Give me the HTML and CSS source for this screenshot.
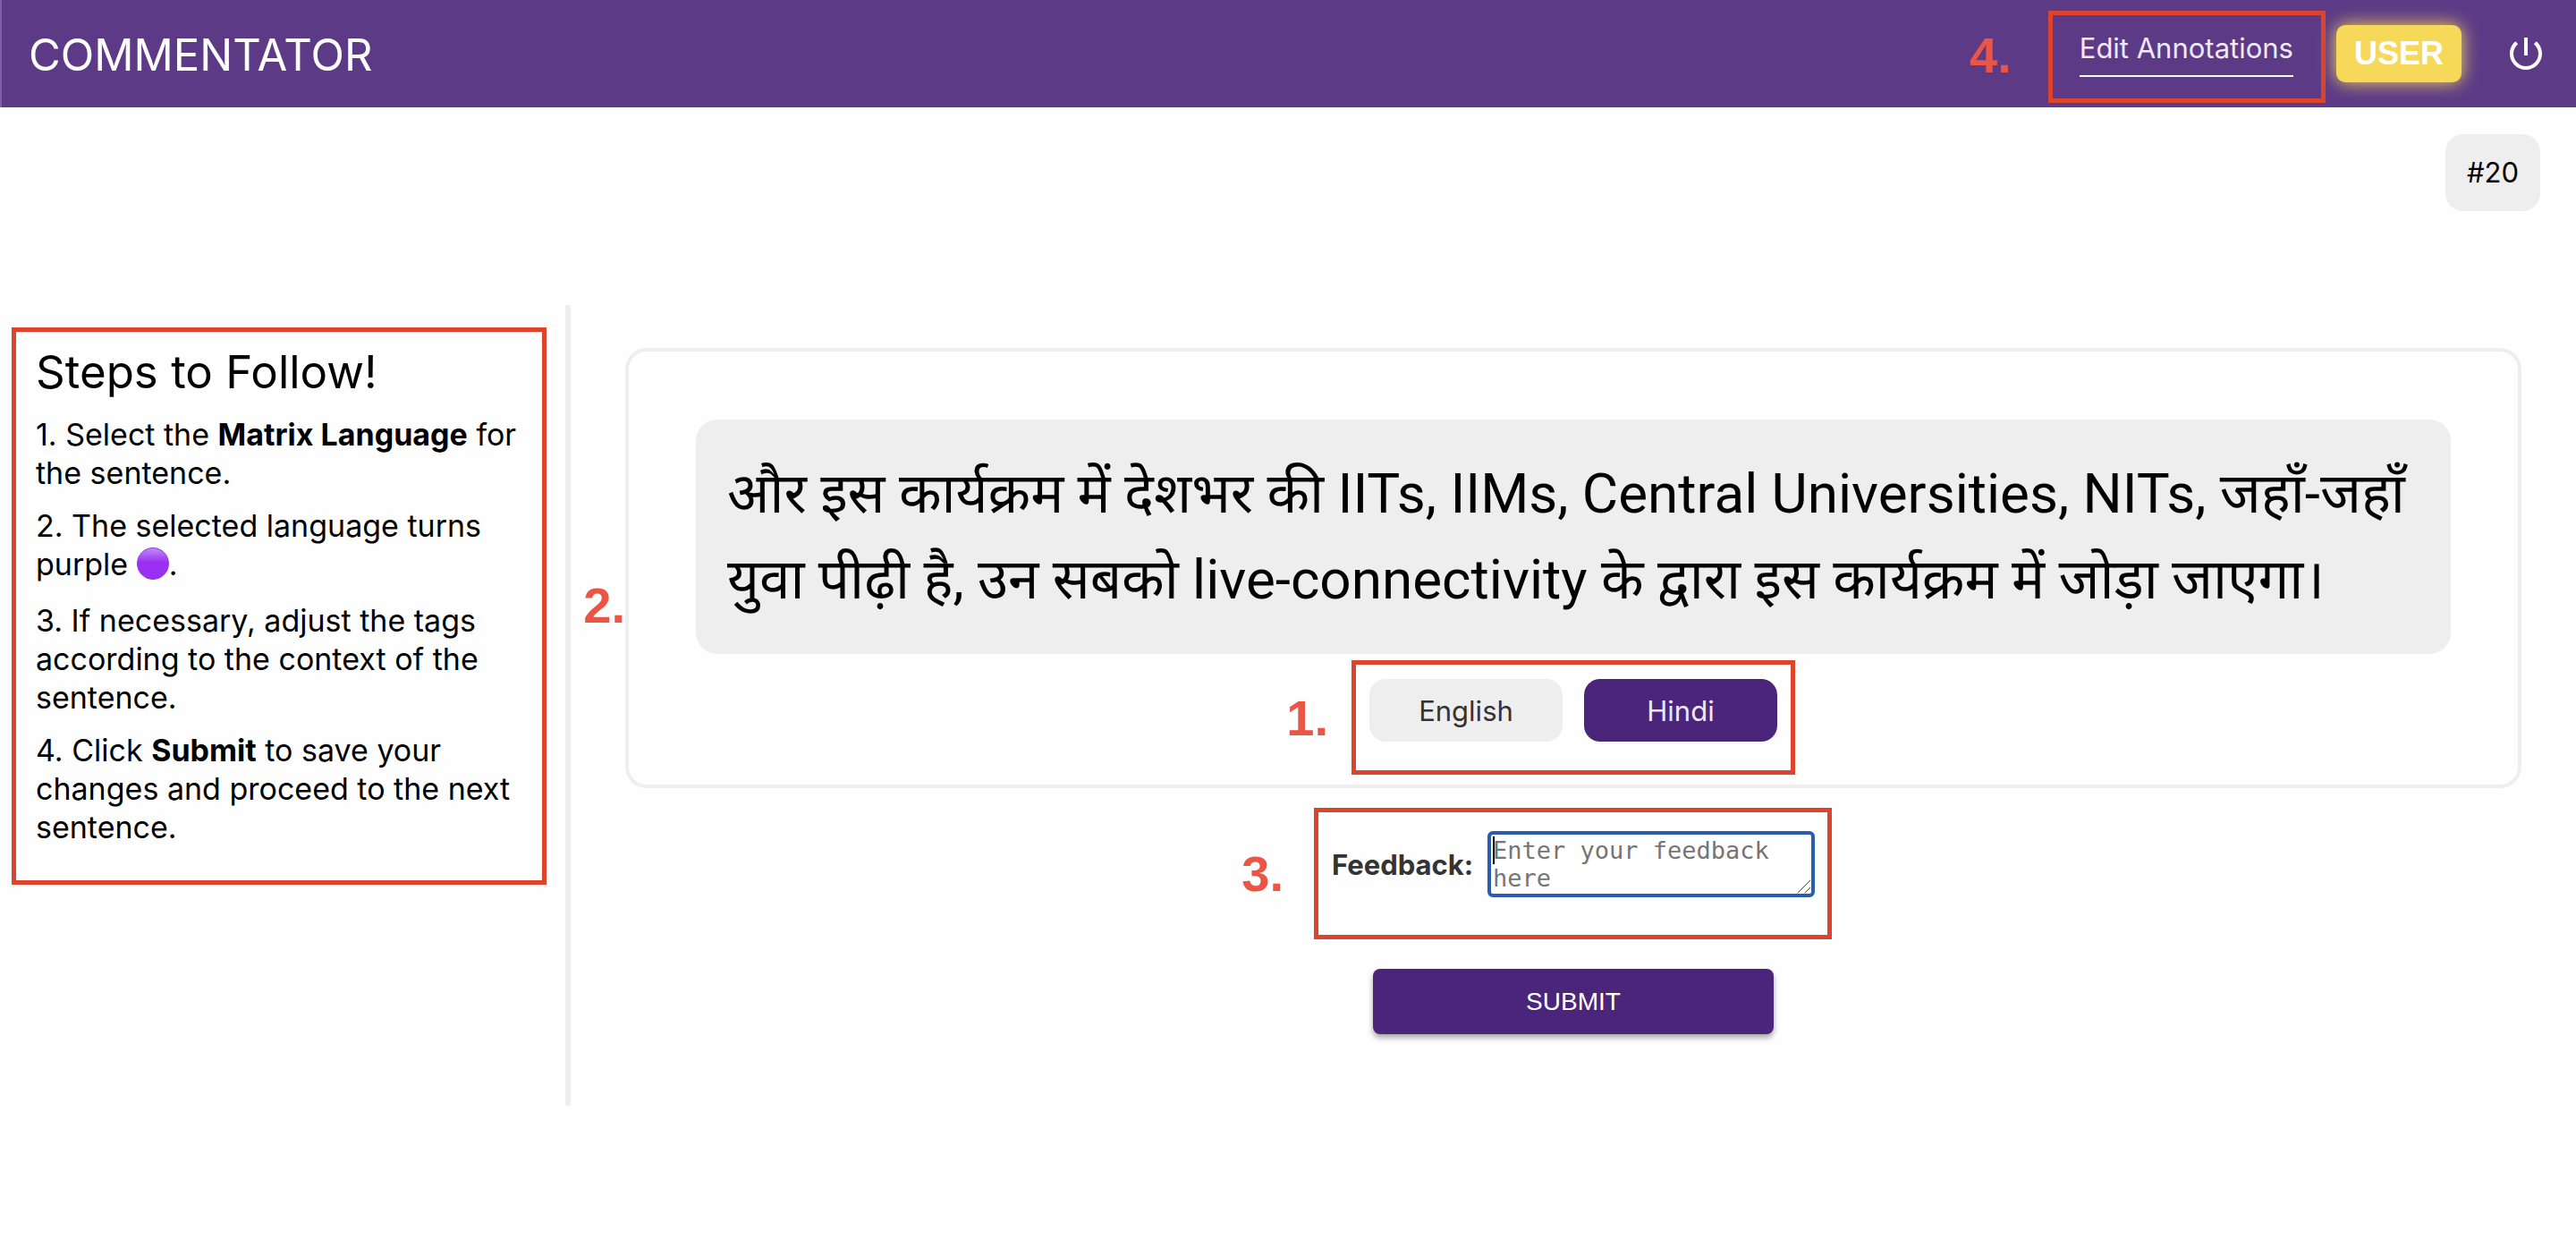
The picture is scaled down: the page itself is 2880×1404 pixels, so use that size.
FILE: index.html
```html
<!DOCTYPE html>
<html lang="en">
<head>
<meta charset="utf-8">
<meta name="viewport" content="width=device-width, initial-scale=1">
<title>Commentator</title>
<link rel="stylesheet" href="styles.css">
</head>
<body>
<header class="topbar">
  <a class="brand" href="#">COMMENTATOR</a>
  <nav class="nav">
    <div class="anchor">
      <a class="nav-link" href="#">Edit Annotations</a>
      <span class="callout callout-nav"></span>
      <span class="marker marker-nav">4.</span>
    </div>
    <span class="user">USER</span>
    <button class="power" type="button" aria-label="Log out">
      <svg viewBox="0 0 24 24" width="48" height="48" fill="currentColor" aria-hidden="true"><path d="M13 3h-2v10h2V3zm4.83 2.17l-1.42 1.42C17.99 7.86 19 9.81 19 12c0 3.87-3.13 7-7 7s-7-3.13-7-7c0-2.19 1.01-4.14 2.58-5.42L6.17 5.17C4.23 6.82 3 9.26 3 12c0 4.97 4.03 9 9 9s9-4.03 9-9c0-2.74-1.23-5.18-3.17-6.83z"/></svg>
    </button>
  </nav>
</header>
<div class="counter-row"><span class="counter">#20</span></div>
<main class="workspace">
  <aside class="sidebar">
    <section class="steps">
      <h1 class="steps-title">Steps to Follow!</h1>
      <p class="step">1. Select the <b>Matrix Language</b> for the sentence.</p>
      <p class="step">2. The selected language turns purple <span class="dot" role="img" aria-label="purple circle"></span>.</p>
      <p class="step">3. If necessary, adjust the tags according to the context of the sentence.</p>
      <p class="step">4. Click <b>Submit</b> to save your changes and proceed to the next sentence.</p>
    </section>
  </aside>
  <form class="editor">
    <section class="card">
      <p class="sentence" lang="hi">और इस कार्यक्रम में देशभर की IITs, IIMs, Central Universities, NITs, जहाँ-जहाँ<br>युवा पीढ़ी है, उन सबको live-connectivity के द्वारा इस कार्यक्रम में जोड़ा जाएगा।</p>
      <div class="languages anchor">
        <button class="language" type="button">English</button>
        <button class="language language-selected" type="button">Hindi</button>
        <span class="callout callout-languages"></span>
        <span class="marker marker-languages">1.</span>
      </div>
      <span class="marker marker-card">2.</span>
    </section>
    <div class="feedback anchor">
      <label class="feedback-label" for="feedback">Feedback:</label>
      <div class="feedback-field anchor">
        <textarea class="feedback-input" id="feedback" rows="2" placeholder="Enter your feedback here"></textarea>
        <svg class="grip" viewBox="0 0 16 16" width="16" height="16" fill="none" stroke="#444" aria-hidden="true"><path d="M1 15L15 1M9 15l6-6"/></svg>
      </div>
      <span class="callout callout-feedback"></span>
      <span class="marker marker-feedback">3.</span>
    </div>
    <button class="submit" type="submit">SUBMIT</button>
  </form>
</main>
</body>
</html>
```
FILE: styles.css
```css
* {
  box-sizing: border-box;
}

body {
  margin: 0;
  background: #fefefe;
  color: #000;
  font-family: Inter, "Noto Sans", sans-serif;
  font-size: 31px;
}

h1,
p {
  margin: 0;
  font-weight: 400;
}

button {
  border: 0;
  font: inherit;
  cursor: pointer;
}

.anchor {
  position: relative;
}

/* Header */
.topbar {
  display: flex;
  align-items: center;
  justify-content: space-between;
  height: 120px;
  padding: 0 32px 0 30px;
  background: #5c3a86;
  border-left: 2px solid #7d62a0;
}

.brand {
  padding-top: 2px;
  color: #fff;
  font-size: 49px;
  text-decoration: none;
}

.nav {
  display: flex;
  align-items: center;
  gap: 48px;
}

.nav-link {
  display: block;
  padding-bottom: 10px;
  border-bottom: 2px solid #fff;
  color: #f1e8fb;
  line-height: 40px;
  text-decoration: none;
}

.user {
  padding: 0 20px;
  border-radius: 10px;
  background: #f7d959;
  box-shadow: 0 0 20px #f7d959;
  color: #fff;
  font: bold 36px/64px "Liberation Sans", Arial, sans-serif;
}

.power {
  display: flex;
  padding: 0;
  background: none;
  color: #fff;
}

/* Sentence counter */
.counter-row {
  display: flex;
  justify-content: flex-end;
  padding: 30px 40px 0;
}

.counter {
  padding: 0 24px;
  border-radius: 20px;
  background: #eee;
  line-height: 86px;
}

/* Workspace */
.workspace {
  display: grid;
  grid-template-columns: 638px 1fr;
  min-height: 895px;
  margin-top: 105px;
}

.sidebar {
  padding: 25px 21px 0 13px;
  border-right: 6px solid #eee;
}

.steps {
  padding: 13px 16px 38px 22px;
  border: 5px solid #dc452b;
}

.steps-title {
  font-size: 51px;
  line-height: 64px;
}

.step {
  margin-top: 16px;
  font-size: 34px;
  line-height: 43px;
}

.dot {
  display: inline-block;
  width: 36px;
  height: 36px;
  margin-bottom: 8px;
  border: 1px solid #8a35d8;
  border-radius: 50%;
  background: linear-gradient(#c08af5, #9a31f2 45%);
  vertical-align: -13px;
}

/* Editor */
.editor {
  display: flex;
  flex-direction: column;
  align-items: center;
  padding: 48px 61px 0;
}

.card {
  position: relative;
  width: 100%;
  padding: 76px 75px 48px;
  border: 4px solid #eee;
  border-radius: 24px;
}

.sentence {
  padding: 35px;
  border-radius: 24px;
  background: #eee;
  font-family: Roboto, "Noto Sans", sans-serif;
  font-size: 62px;
  line-height: 96px;
}

.languages {
  display: flex;
  justify-content: center;
  gap: 24px;
  width: 456px;
  margin: 28px auto 0;
}

.language {
  flex: 1;
  height: 70px;
  border-radius: 18px;
  background: #eee;
  color: #333;
}

.language-selected {
  background: #4a2579;
  color: #f1e8fb;
}

.feedback {
  display: flex;
  align-items: center;
  justify-content: space-between;
  width: 540px;
  margin-top: 48px;
}

.feedback-label {
  color: #333;
  font-weight: 700;
}

.feedback-field {
  display: flex;
}

/* The background strip is the text caret at the start of the field */
.feedback-input {
  width: 366px;
  height: 74px;
  padding: 2px;
  border: 4px solid #2a5db0;
  border-radius: 6px;
  outline: 0;
  background: linear-gradient(#000, #000) 2px 2px / 2px 31px no-repeat #fff;
  font: 27px/31px "DejaVu Sans Mono", monospace;
  overflow: hidden;
  resize: none;
}

.feedback-input::placeholder {
  color: #757575;
}

.grip {
  position: absolute;
  right: 4px;
  bottom: 4px;
}

.submit {
  width: 448px;
  height: 73px;
  margin-top: 80px;
  border-radius: 8px;
  background: #4a2579;
  box-shadow: 0 4px 6px rgba(0, 0, 0, 0.35);
  color: #fff;
  font: 28px "Liberation Sans", Arial, sans-serif;
}

/* Numbered callouts drawn over the controls */
.callout {
  position: absolute;
  border: 5px solid #dc452b;
  pointer-events: none;
}

.callout-nav {
  inset: -22px -36px -29px -35px;
}

.callout-languages {
  inset: -21px -20px -37px -20px;
}

.callout-feedback {
  inset: -26px -19px -47px -20px;
}

.marker {
  position: absolute;
  color: #ea5545;
  font: bold 56px/56px "Liberation Sans", Arial, sans-serif;
}

.marker-nav {
  right: calc(100% + 76px);
  top: 0;
}

.marker-languages {
  right: calc(100% + 46px);
  top: 16px;
}

.marker-card {
  right: calc(100% + 4px);
  top: 256px;
}

.marker-feedback {
  right: calc(100% + 54px);
  top: 20px;
}
```
